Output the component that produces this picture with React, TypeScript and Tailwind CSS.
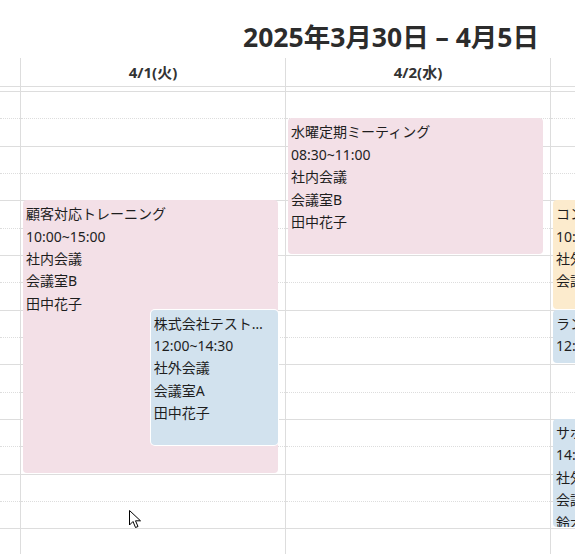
import React from "react";

const SLOT = 27.33;
const START_HOUR = 8;
const SLOT_COUNT = 18;

type CalEvent = {
  title: string;
  lines: string[];
  start: number;
  end: number;
  color: string;
  inset?: boolean;
};

const days: { label: string; events: CalEvent[] }[] = [
  {
    label: "4/1(火)",
    events: [
      {
        title: "顧客対応トレーニング",
        lines: ["10:00~15:00", "社内会議", "会議室B", "田中花子"],
        start: 10,
        end: 15,
        color: "bg-[#f3e0e7]",
      },
      {
        title: "株式会社テスト様との打ち合わせ",
        lines: ["12:00~14:30", "社外会議", "会議室A", "田中花子"],
        start: 12,
        end: 14.5,
        color: "bg-[#d2e2ee]",
        inset: true,
      },
    ],
  },
  {
    label: "4/2(水)",
    events: [
      {
        title: "水曜定期ミーティング",
        lines: ["08:30~11:00", "社内会議", "会議室B", "田中花子"],
        start: 8.5,
        end: 11,
        color: "bg-[#f3e0e7]",
      },
    ],
  },
  {
    label: "4/3(木)",
    events: [
      {
        title: "コンペ準備会議",
        lines: ["10:00~12:00", "社外会議", "会議室C"],
        start: 10,
        end: 12,
        color: "bg-[#fcebcd]",
      },
      {
        title: "ランチミーティング",
        lines: ["12:00~13:00"],
        start: 12,
        end: 13,
        color: "bg-[#d2e2ee]",
      },
      {
        title: "サポート定例",
        lines: ["14:00~16:00", "社外会議", "会議室A", "鈴木一郎"],
        start: 14,
        end: 16,
        color: "bg-[#d2e2ee]",
      },
    ],
  },
];

function Slots() {
  return (
    <>
      {Array.from({ length: SLOT_COUNT }, (_, i) => (
        <div
          key={i}
          className={
            i % 2 === 0
              ? "h-[27.33px] border-b border-dotted border-[#ddd]"
              : "h-[27.33px] border-b border-[#ddd]"
          }
        />
      ))}
    </>
  );
}

function EventBlock({ ev }: { ev: CalEvent }) {
  const top = (ev.start - START_HOUR) * 2 * SLOT - 1;
  const height = (ev.end - ev.start) * 2 * SLOT - 1;

  return (
    <div
      className={`absolute right-0 overflow-hidden rounded-[4px] p-[3px] text-[14px] leading-[1.6] text-[#1e1e1e] ${ev.color} ${
        ev.inset ? "left-1/2 shadow-[0_0_0_1px_#fff]" : "left-0"
      }`}
      style={{ top, height }}
    >
      <div className="truncate">{ev.title}</div>
      {ev.lines.map((line) => (
        <div key={line} className="truncate">
          {line}
        </div>
      ))}
    </div>
  );
}

function DayColumn({ label, events }: { label: string; events: CalEvent[] }) {
  return (
    <div className="flex flex-col border-l border-[#ddd]">
      <div className="flex h-[29px] items-center justify-center border-b border-[#ddd] text-[15px] font-bold text-[#333]">
        {label}
      </div>
      <div className="h-[5px] border-b border-[#ddd]" />
      <div className="relative">
        <Slots />
        <div className="absolute top-0 bottom-0 left-[2px] right-[2.5%]">
          {events.map((ev) => (
            <EventBlock key={ev.title} ev={ev} />
          ))}
        </div>
      </div>
    </div>
  );
}

export default function App() {
  return (
    <div
      className="relative h-[554px] w-[575px] overflow-hidden bg-white"
      style={{ fontFamily: '"Noto Sans", "Noto Sans CJK JP", sans-serif' }}
    >
      <div className="flex h-[58px] justify-end pr-[36px] pt-[18px]">
        <h2 className="text-[26.5px] font-bold leading-[38px] text-[#2c2c2c]">
          2025年3月30日 – 4月5日
        </h2>
      </div>

      <div className="grid grid-cols-[20px_265px_265px_265px]">
        <div className="flex flex-col">
          <div className="h-[29px] border-b border-[#ddd]" />
          <div className="h-[5px] border-b border-[#ddd]" />
          <Slots />
        </div>
        {days.map((d) => (
          <DayColumn key={d.label} label={d.label} events={d.events} />
        ))}
      </div>

      {/* mouse pointer */}
      <svg
        className="absolute left-[129px] top-[510px]"
        width="14"
        height="20"
        viewBox="0 0 14 20"
      >
        <path
          d="M0.5 0.5 L0.5 15 L4 11.5 L6.5 17.5 L9 16.5 L6.5 10.8 L11.5 10.8 Z"
          fill="#fff"
          stroke="#000"
          strokeWidth="1"
          strokeLinejoin="round"
        />
      </svg>
    </div>
  );
}
